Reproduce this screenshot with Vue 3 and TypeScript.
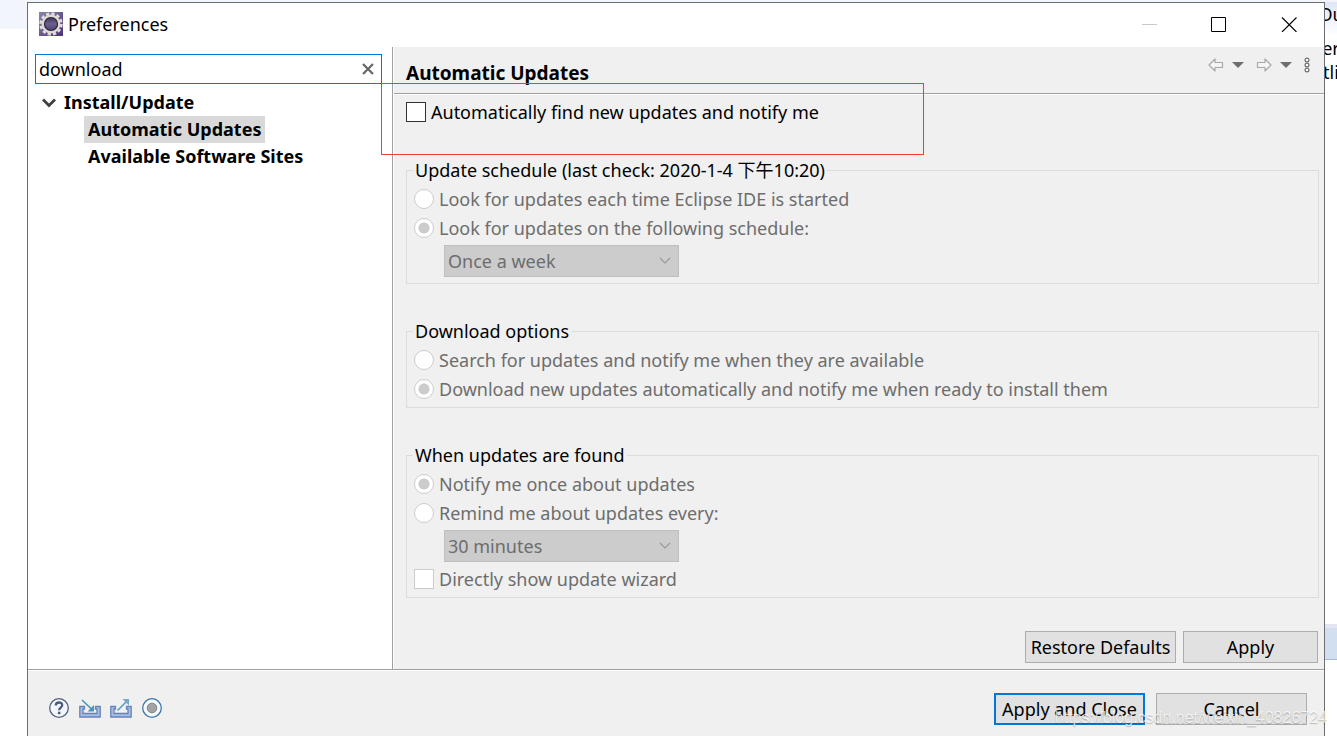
<script setup lang="ts">
import { ref } from 'vue'

const filter = ref('download')
const autoFind = ref(false)
const schedule = ref('following')
const interval = ref('Once a week')
const download = ref('download')
const notify = ref('once')
const remind = ref('30 minutes')
const wizard = ref(false)
</script>

<template>
  <div class="desktop">
    <div class="behind-left"></div>
    <main class="window">
      <header class="titlebar">
        <svg class="app-icon" viewBox="0 0 24 24" aria-hidden="true">
          <defs>
            <linearGradient id="plum" x1="0" y1="0" x2="1" y2="1">
              <stop offset="0" stop-color="#8d84a6" />
              <stop offset="0.5" stop-color="#6a5a90" />
              <stop offset="1" stop-color="#4a3080" />
            </linearGradient>
            <linearGradient id="core" x1="0" y1="0" x2="0" y2="1">
              <stop offset="0" stop-color="#35304a" />
              <stop offset="0.5" stop-color="#6c6090" />
              <stop offset="1" stop-color="#453768" />
            </linearGradient>
          </defs>
          <rect width="24" height="24" fill="url(#plum)" />
          <circle cx="12" cy="12" r="10" fill="none" stroke="#dedbd8" stroke-width="3.4" stroke-dasharray="3.2 2.036" />
          <circle cx="12" cy="12" r="8" fill="url(#core)" stroke="#dcd9d6" stroke-width="2.8" />
          <circle cx="12" cy="12" r="6.500" fill="none" stroke="#2b263b" stroke-width="1.2" />
        </svg>
        <h1 class="title">Preferences</h1>
        <div class="window-controls">
          <button type="button" aria-label="Minimize" disabled>
            <svg viewBox="0 0 16 16"><path d="M1 8.5H16" stroke="#c8c8c8" /></svg>
          </button>
          <button type="button" aria-label="Maximize">
            <svg viewBox="0 0 16 16"><path d="M.5 1.5h14v14H.5z" fill="none" stroke="#000" /></svg>
          </button>
          <button type="button" aria-label="Close">
            <svg viewBox="0 0 16 16"><path d="M1 1.5l14.5 14.5M15.500 1.5L1 16" stroke="#000" stroke-width="1.1" /></svg>
          </button>
        </div>
      </header>

      <div class="body">
        <nav class="sidebar" aria-label="Preference pages">
          <div class="search">
            <input v-model="filter" type="text" aria-label="Filter" spellcheck="false" />
            <button type="button" aria-label="Clear" @click="filter = ''">
              <svg viewBox="0 0 12 12"><path d="M1 1l10 10M11 1L1 11" stroke="#666" stroke-width="2.2" /></svg>
            </button>
          </div>
          <ul class="tree">
            <li>
              <div class="branch">
                <svg viewBox="0 0 14 10" aria-hidden="true"><path d="M1 1.5l6 6 6-6" fill="none" stroke="#404040" stroke-width="2.8" /></svg>
                <a href="#install">Install/Update</a>
              </div>
              <ul>
                <li><a class="selected" href="#automatic" aria-current="page">Automatic Updates</a></li>
                <li><a href="#sites">Available Software Sites</a></li>
              </ul>
            </li>
          </ul>
        </nav>

        <section class="page">
          <header class="page-head">
            <h2>Automatic Updates</h2>
            <div class="history">
              <div class="pair">
                <button type="button" aria-label="Back" disabled>
                  <svg width="16" height="14" viewBox="0 0 16 14"><path d="M1 7L7 1V4.500h7.500v5H7v3.500z" fill="#f5f5f5" stroke="#a8a8a8" stroke-width="1.2" stroke-linejoin="round" /></svg>
                </button>
                <button type="button" aria-label="Back history">
                  <svg width="12" height="6" viewBox="0 0 12 6"><path d="M0 0h12L6 6z" fill="#6e6e70" /></svg>
                </button>
              </div>
              <div class="pair">
                <button type="button" aria-label="Forward" disabled>
                  <svg width="16" height="14" viewBox="0 0 16 14"><path d="M15 7L9 1V4.500H1.500v5H9v3.500z" fill="#f5f5f5" stroke="#a8a8a8" stroke-width="1.2" stroke-linejoin="round" /></svg>
                </button>
                <button type="button" aria-label="Forward history">
                  <svg width="12" height="6" viewBox="0 0 12 6"><path d="M0 0h12L6 6z" fill="#6e6e70" /></svg>
                </button>
              </div>
              <button type="button" aria-label="Menu">
                <svg width="6" height="16" viewBox="0 0 6 16"><g fill="#fff" stroke="#6e6e70" stroke-width="1.2"><circle cx="3" cy="3" r="1.9" /><circle cx="3" cy="8" r="1.9" /><circle cx="3" cy="13" r="1.9" /></g></svg>
              </button>
            </div>
          </header>

          <form class="options" @submit.prevent>
            <label class="row"><input v-model="autoFind" type="checkbox" />Automatically find new updates and notify me</label>

            <fieldset class="first">
              <legend>Update schedule (last check: 2020-1-4 下午10:20)</legend>
              <label class="row"><input v-model="schedule" type="radio" name="schedule" value="start" disabled />Look for updates each time Eclipse IDE is started</label>
              <label class="row"><input v-model="schedule" type="radio" name="schedule" value="following" disabled />Look for updates on the following schedule:</label>
              <div class="combo">
                <select v-model="interval" aria-label="Schedule" disabled><option>Once a week</option></select>
                <svg viewBox="0 0 12 8" aria-hidden="true"><path d="M1 1l5 5 5-5" fill="none" stroke="#9a9a9a" stroke-width="1.2" /></svg>
              </div>
            </fieldset>

            <fieldset>
              <legend>Download options</legend>
              <label class="row"><input v-model="download" type="radio" name="download" value="search" disabled />Search for updates and notify me when they are available</label>
              <label class="row"><input v-model="download" type="radio" name="download" value="download" disabled />Download new updates automatically and notify me when ready to install them</label>
            </fieldset>

            <fieldset>
              <legend>When updates are found</legend>
              <label class="row"><input v-model="notify" type="radio" name="notify" value="once" disabled />Notify me once about updates</label>
              <label class="row"><input v-model="notify" type="radio" name="notify" value="remind" disabled />Remind me about updates every:</label>
              <div class="combo">
                <select v-model="remind" aria-label="Reminder interval" disabled><option>30 minutes</option></select>
                <svg viewBox="0 0 12 8" aria-hidden="true"><path d="M1 1l5 5 5-5" fill="none" stroke="#9a9a9a" stroke-width="1.2" /></svg>
              </div>
              <label class="row"><input v-model="wizard" type="checkbox" disabled />Directly show update wizard</label>
            </fieldset>

            <div class="page-actions">
              <button class="push" type="button">Restore Defaults</button>
              <button class="push short" type="button">Apply</button>
            </div>
          </form>
        </section>
      </div>

      <footer class="footer">
        <div class="tools">
          <button type="button" aria-label="Help">
            <svg viewBox="0 0 22 22"><circle cx="11" cy="11" r="9.300" fill="#f4f6fa" stroke="#53617f" stroke-width="1.300" /><path d="M7.800 8.600C7.800 4.400 14.300 4.600 14.200 8.300C14.100 10.600 11.100 10.600 11.100 13.200" fill="none" stroke="#4b5b80" stroke-width="2.300" /><rect x="9.900" y="14.700" width="2.500" height="2.500" fill="#4b5b80" /></svg>
          </button>
          <button type="button" aria-label="Import">
            <svg viewBox="0 0 22 22"><path d="M5.500 9.500H.8V20H21.200V9.500H16.500V12H18V16.500H4V12H5.500z" fill="#a9bfe2" stroke="#6484bb" stroke-width="1.300" /><path d="M3 3L13 12.500" stroke="#4b92bd" stroke-width="1.600" /><path d="M15 8v6.500H8.500z" fill="#4b92bd" /></svg>
          </button>
          <button type="button" aria-label="Export">
            <svg viewBox="0 0 22 22"><path d="M5.500 9.500H.8V20H21.200V9.500H16.500V12H18V16.500H4V12H5.500z" fill="#a9bfe2" stroke="#6484bb" stroke-width="1.300" /><path d="M7.500 13.500L16 5" stroke="#5a9cc4" stroke-width="1.600" /><path d="M12.500 2H19V8.500z" fill="#72a9c4" /></svg>
          </button>
          <button type="button" aria-label="Record">
            <svg viewBox="0 0 22 22"><circle cx="11" cy="11" r="9.300" fill="#f3faff" stroke="#3f74a6" stroke-width="1.300" /><circle cx="11" cy="11" r="4.800" fill="#a3a3a3" stroke="#838383" /></svg>
          </button>
        </div>
        <div class="actions">
          <button class="push primary" type="submit">Apply and Close</button>
          <button class="push" type="button">Cancel</button>
        </div>
      </footer>

      <div class="marker"></div>
    </main>
    <aside class="behind-right">
      <p class="tab">Ou</p>
      <p>er</p>
      <p>tli</p>
      <div class="strip"></div>
    </aside>
    <div class="watermark">https://blog.csdn.net/weixin_40826724</div>
  </div>
</template>

<style>
body {
  margin: 0;
  background: #fff;
}
</style>

<style scoped>
* {
  box-sizing: border-box;
}
.desktop {
  position: relative;
  display: flex;
  height: 100vh;
  padding-top: 2px;
  overflow: hidden;
  background: linear-gradient(#f3f5fc 29px, #fff 29px);
  color: #000;
  font: 18px/29px "Noto Sans", "Noto Sans CJK SC", sans-serif;
}
.behind-left {
  flex: 0 0 27px;
}
.behind-right {
  flex: 0 0 12px;
  display: flex;
  flex-direction: column;
  overflow: hidden;
  background: #fff;
}
.behind-right p {
  display: flex;
  justify-content: center;
  margin: 0;
  line-height: 24px;
}
.behind-right .tab {
  height: 34px;
  background: linear-gradient(#dfe7f5, #fff);
}
.strip {
  height: 36px;
  margin: auto 0 76px;
  border-top: 4px solid #e3e5f4;
  border-bottom: 1px solid #a9b9d2;
  background: #d2dff0;
}
.window {
  position: relative;
  flex: 1;
  min-width: 0;
  display: flex;
  flex-direction: column;
  border: 1px solid #6b6d70;
  border-bottom: 0;
  background: #f0f0f0;
}
button {
  padding: 0;
  border: 0;
  background: none;
  color: inherit;
  font: inherit;
}
svg {
  display: block;
}
.titlebar {
  display: flex;
  align-items: center;
  height: 44px;
  padding: 0 0 2px 11px;
  background: #fff;
}
.app-icon {
  width: 24px;
  height: 24px;
}
.title {
  margin: 0 auto 0 5px;
  font-size: 18px;
  font-weight: 400;
}
.window-controls {
  display: flex;
}
.window-controls button {
  display: grid;
  place-items: center;
  width: 70px;
  height: 42px;
}
.window-controls svg {
  width: 16px;
  height: 16px;
}
.body {
  flex: 1;
  display: flex;
  min-height: 0;
  border-bottom: 1px solid #a0a0a0;
  box-shadow: 0 1px #fff;
}
.sidebar {
  flex: 0 0 366px;
  padding: 7px 10px 0 7px;
  border-right: 1px solid #fff;
  background: linear-gradient(to left, #a0a0a0 1px, #fff 1px);
}
.search {
  display: flex;
  align-items: center;
  width: 347px;
  height: 30px;
  padding: 0 7px 0 3px;
  border: 1px solid #0078d7;
}
.search input {
  flex: 1;
  min-width: 0;
  padding: 0;
  border: 0;
  outline: 0;
  background: none;
  color: #000;
  font: inherit;
}
.search svg {
  width: 12px;
  height: 12px;
}
.tree,
.tree ul {
  margin: 0;
  padding: 0;
  list-style: none;
  font-weight: 700;
  line-height: 27px;
}
.tree {
  padding: 5px 0 0 7px;
}
.tree ul {
  padding-left: 42px;
}
.tree a {
  display: inline-block;
  padding: 0 4px;
  color: #000;
  text-decoration: none;
  vertical-align: top;
  white-space: nowrap;
}
.tree .selected {
  background: #d9d9d9;
}
.branch {
  display: flex;
  align-items: center;
  gap: 4px;
}
.branch svg {
  width: 14px;
  height: 10px;
}
.page {
  flex: 1;
  min-width: 0;
  display: flex;
  flex-direction: column;
}
.page-head {
  display: flex;
  justify-content: space-between;
  align-items: flex-start;
  height: 47px;
  padding: 12px 14px 0 12px;
  border-bottom: 1px solid #a0a0a0;
  box-shadow: 0 1px #fff;
}
h2 {
  margin: 0;
  font-size: 19px;
  font-weight: 700;
}
.history {
  display: flex;
  align-items: center;
  gap: 12px;
  height: 12px;
}
.pair {
  display: flex;
  align-items: center;
  gap: 8px;
}
.options {
  flex: 1;
  display: flex;
  flex-direction: column;
  padding: 4px 5px 6px 12px;
}
.row {
  display: flex;
  align-items: center;
  gap: 5px;
  height: 29px;
  white-space: nowrap;
}
.row input {
  appearance: none;
  flex: none;
  width: 20px;
  height: 20px;
  margin: 0 0 1px;
  border: 1px solid #333;
  background: #fff;
}
.row input:disabled {
  border-color: #ccc;
}
.row input[type="radio"] {
  border-radius: 50%;
}
.row input[type="radio"]:checked {
  background: radial-gradient(circle, #ccc 5px, #fff 6px);
}
.row input[type="checkbox"]:checked {
  background: #333;
  box-shadow: inset 0 0 0 4px #fff;
}
fieldset {
  min-width: 0;
  margin: 33px 0 0;
  padding: 0 7px 3px;
  border: 1px solid #dcdcdc;
  color: #6d6d6d;
}
fieldset.first {
  margin-top: 29px;
}
legend {
  margin-left: -1px;
  padding: 0 2px;
  color: #000;
}
.combo {
  position: relative;
  width: 235px;
  margin: 2px 0 3px 30px;
}
.combo select {
  appearance: none;
  display: block;
  width: 100%;
  height: 32px;
  padding: 0 3px;
  border: 1px solid #bfbfbf;
  border-radius: 0;
  background: #ccc;
  color: #6d6d6d;
  opacity: 1;
  font: inherit;
}
.combo svg {
  position: absolute;
  top: 12px;
  right: 8px;
  width: 12px;
  height: 8px;
}
.page-actions {
  display: flex;
  justify-content: flex-end;
  gap: 7px;
  margin: auto 1px 0 0;
}
.push {
  width: 151px;
  height: 32px;
  border: 1px solid #adadad;
  background: #e1e1e1;
  white-space: nowrap;
}
.push.short {
  width: 135px;
}
.push.primary {
  border: 2px solid #0078d7;
}
.footer {
  display: flex;
  justify-content: space-between;
  align-items: flex-start;
  height: 66px;
  padding: 23px 17px 0 20px;
}
.tools {
  display: flex;
  gap: 9px;
  padding-top: 4px;
}
.tools svg {
  width: 22px;
  height: 22px;
}
.actions {
  display: flex;
  gap: 11px;
}
.marker {
  position: absolute;
  top: 80px;
  left: 353px;
  width: 543px;
  height: 72px;
  border: 1px solid #f23c3c;
  pointer-events: none;
}
.watermark {
  position: absolute;
  right: 10px;
  bottom: 8px;
  color: rgba(255, 255, 255, 0.75);
  font: 16px/20px "Liberation Sans", sans-serif;
  text-shadow: 0 1px 1px rgba(0, 0, 0, 0.25);
  pointer-events: none;
}
</style>
